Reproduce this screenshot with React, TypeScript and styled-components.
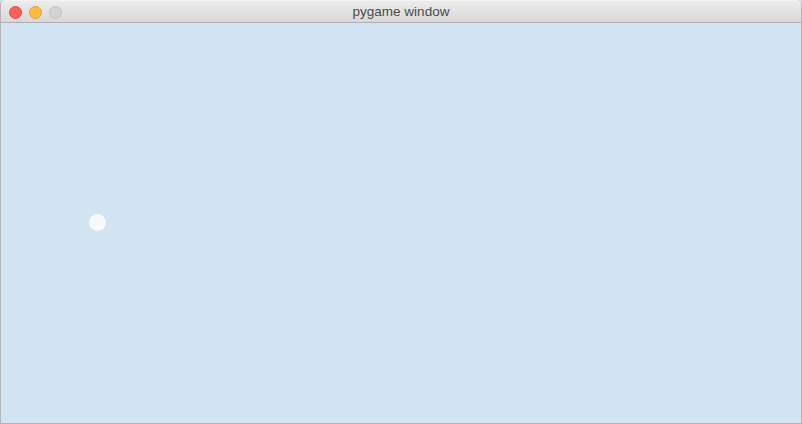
import React from "react";
import styled, { createGlobalStyle } from "styled-components";

const Global = createGlobalStyle`
  html, body { margin: 0; padding: 0; }
  body { width: 802px; height: 424px; overflow: hidden; background: #d2e3f1; }
`;

const Window = styled.div`
  width: 802px;
  height: 424px;
  display: flex;
  flex-direction: column;
  box-sizing: border-box;
  border: 1px solid #b4b4b4;
  border-top: none;
  border-radius: 5px 5px 0 0;
  overflow: hidden;
`;

const TitleBar = styled.div`
  height: 23px;
  flex: 0 0 23px;
  box-sizing: border-box;
  display: flex;
  align-items: center;
  position: relative;
  background: linear-gradient(#ececec, #d8d8d8);
  border-bottom: 1px solid #b1b1b1;
  border-top: 1px solid #f4f4f4;
`;

const Lights = styled.div`
  display: flex;
  gap: 7px;
  position: absolute;
  left: 8px;
  top: 5px;
`;

const Light = styled.div<{ $bg: string; $border: string }>`
  width: 13px;
  height: 13px;
  border-radius: 50%;
  box-sizing: border-box;
  background: ${(p) => p.$bg};
  border: 0.5px solid ${(p) => p.$border};
`;

const Title = styled.div`
  flex: 1;
  text-align: center;
  font-family: "Liberation Sans", Arial, sans-serif;
  font-size: 13.5px;
  color: #4a4a4a;
  line-height: 22px;
`;

const Canvas = styled.div`
  flex: 1;
  position: relative;
  background: #d2e3f1;
`;

const Dot = styled.div`
  position: absolute;
  left: 88px;
  top: 191px;
  width: 17px;
  height: 17px;
  border-radius: 50%;
  background: #f7f9fb;
`;

export default function App() {
  return (
    <>
      <Global />
      <Window>
        <TitleBar>
          <Lights>
            <Light $bg="#fc605c" $border="#de4a44" />
            <Light $bg="#fdbc40" $border="#dea035" />
            <Light $bg="#d3d3d3" $border="#c0c0c0" />
          </Lights>
          <Title>pygame window</Title>
        </TitleBar>
        <Canvas>
          <Dot />
        </Canvas>
      </Window>
    </>
  );
}
